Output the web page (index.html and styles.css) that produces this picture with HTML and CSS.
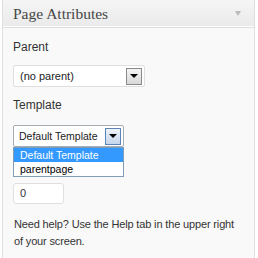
FILE: index.html
```html
<!DOCTYPE html>
<html lang="en">
<head>
    <meta charset="UTF-8">
    <title>Page Attributes</title>
    <link rel="stylesheet" href="styles.css">
</head>
<body>
<div class="postbox">
    <div class="hndle">
        <h3>Page Attributes</h3>
        <span class="toggle"></span>
    </div>
    <div class="inside">
        <p class="label">Parent</p>
        <div class="select parent-select">
            <span class="value">(no parent)</span>
            <span class="drop-btn"><span class="tri"></span></span>
        </div>

        <p class="label template-label">Template</p>
        <div class="select-wrap">
            <div class="select template-select">
                <span class="value">Default Template</span>
                <span class="drop-btn open"><span class="tri"></span></span>
            </div>
            <ul class="options">
                <li class="selected">Default Template</li>
                <li>parentpage</li>
            </ul>
        </div>

        <div class="order-input">0</div>

        <p class="help">Need help? Use the Help tab in the upper right of your screen.</p>
    </div>
</div>
</body>
</html>
```

FILE: styles.css
```css
body {
    margin: 0;
    background-color: #fff;
    font-family: "Liberation Sans", Arial, sans-serif;
    font-size: 12px;
    color: #333;
}

.postbox {
    margin-left: 2px;
    width: 251px;
    height: 258px;
    overflow: hidden;
    border: 1px solid #dfdfdf;
    border-top: none;
    border-bottom: none;
    background-color: #f9f9f9;
}

/* Header */
.hndle {
    height: 27px;
    display: flex;
    align-items: center;
    justify-content: space-between;
    padding: 0 13px 0 10px;
    background: linear-gradient(to bottom, #f5f5f5, #eaeaea);
    border-bottom: 1px solid #dfdfdf;
    box-shadow: inset 0 -1px 0 #fff;
}

.hndle h3 {
    margin: 0;
    font-family: "Liberation Serif", Georgia, serif;
    font-weight: normal;
    font-size: 15.5px;
    color: #464646;
}

.toggle {
    width: 0;
    height: 0;
    border-left: 3px solid transparent;
    border-right: 3px solid transparent;
    border-top: 5px solid #bbb;
}

/* Body */
.inside {
    padding: 0 14px 0 10px;
}

.label {
    margin: 0;
    line-height: 16px;
    color: #333;
}

.inside > .label:first-child {
    padding-top: 11px;
}

.template-label {
    margin-top: 10px;
}

.select {
    display: flex;
    align-items: center;
    justify-content: space-between;
    height: 20px;
    background-color: #fff;
    border: 1px solid #dfdfdf;
    border-radius: 2px;
    padding: 0 2px 0 6px;
    font-size: 11px;
    color: #222;
    white-space: nowrap;
}

.parent-select {
    width: 122px;
    margin-top: 10px;
}

.select-wrap {
    position: relative;
    margin-top: 12px;
}

.template-select {
    width: 102px;
    border-color: #a5acb2;
    padding-left: 5px;
    font-size: 10.5px;
}

.drop-btn {
    width: 14px;
    height: 15px;
    display: flex;
    align-items: center;
    justify-content: center;
    border: 1px solid #8a8a8a;
    background: linear-gradient(to bottom, #f4f4f4, #d8d8d8);
}

.drop-btn.open {
    border-color: #5f83b4;
    background: linear-gradient(to bottom, #eef3fa, #c4d5ec);
}

.tri {
    width: 0;
    height: 0;
    border-left: 4px solid transparent;
    border-right: 4px solid transparent;
    border-top: 4px solid #000;
}

.options {
    position: absolute;
    top: 22px;
    left: 0;
    width: 109px;
    margin: 0;
    padding: 0;
    list-style: none;
    background-color: #fff;
    border: 1px solid #7f9db9;
    font-size: 10.5px;
    color: #000;
}

.options li {
    height: 14px;
    line-height: 14px;
    padding-left: 6px;
    white-space: nowrap;
}

.options li.selected {
    background-color: #3399ff;
    color: #fff;
}

.order-input {
    width: 43px;
    height: 19px;
    margin-top: 36px;
    padding-left: 6px;
    line-height: 19px;
    font-size: 11px;
    background-color: #fff;
    border: 1px solid #dfdfdf;
    border-radius: 3px;
    color: #333;
}

.help {
    margin: 12px 0 0 1px;
    line-height: 17px;
    font-size: 11px;
    letter-spacing: -0.15px;
    color: #333;
}
```
